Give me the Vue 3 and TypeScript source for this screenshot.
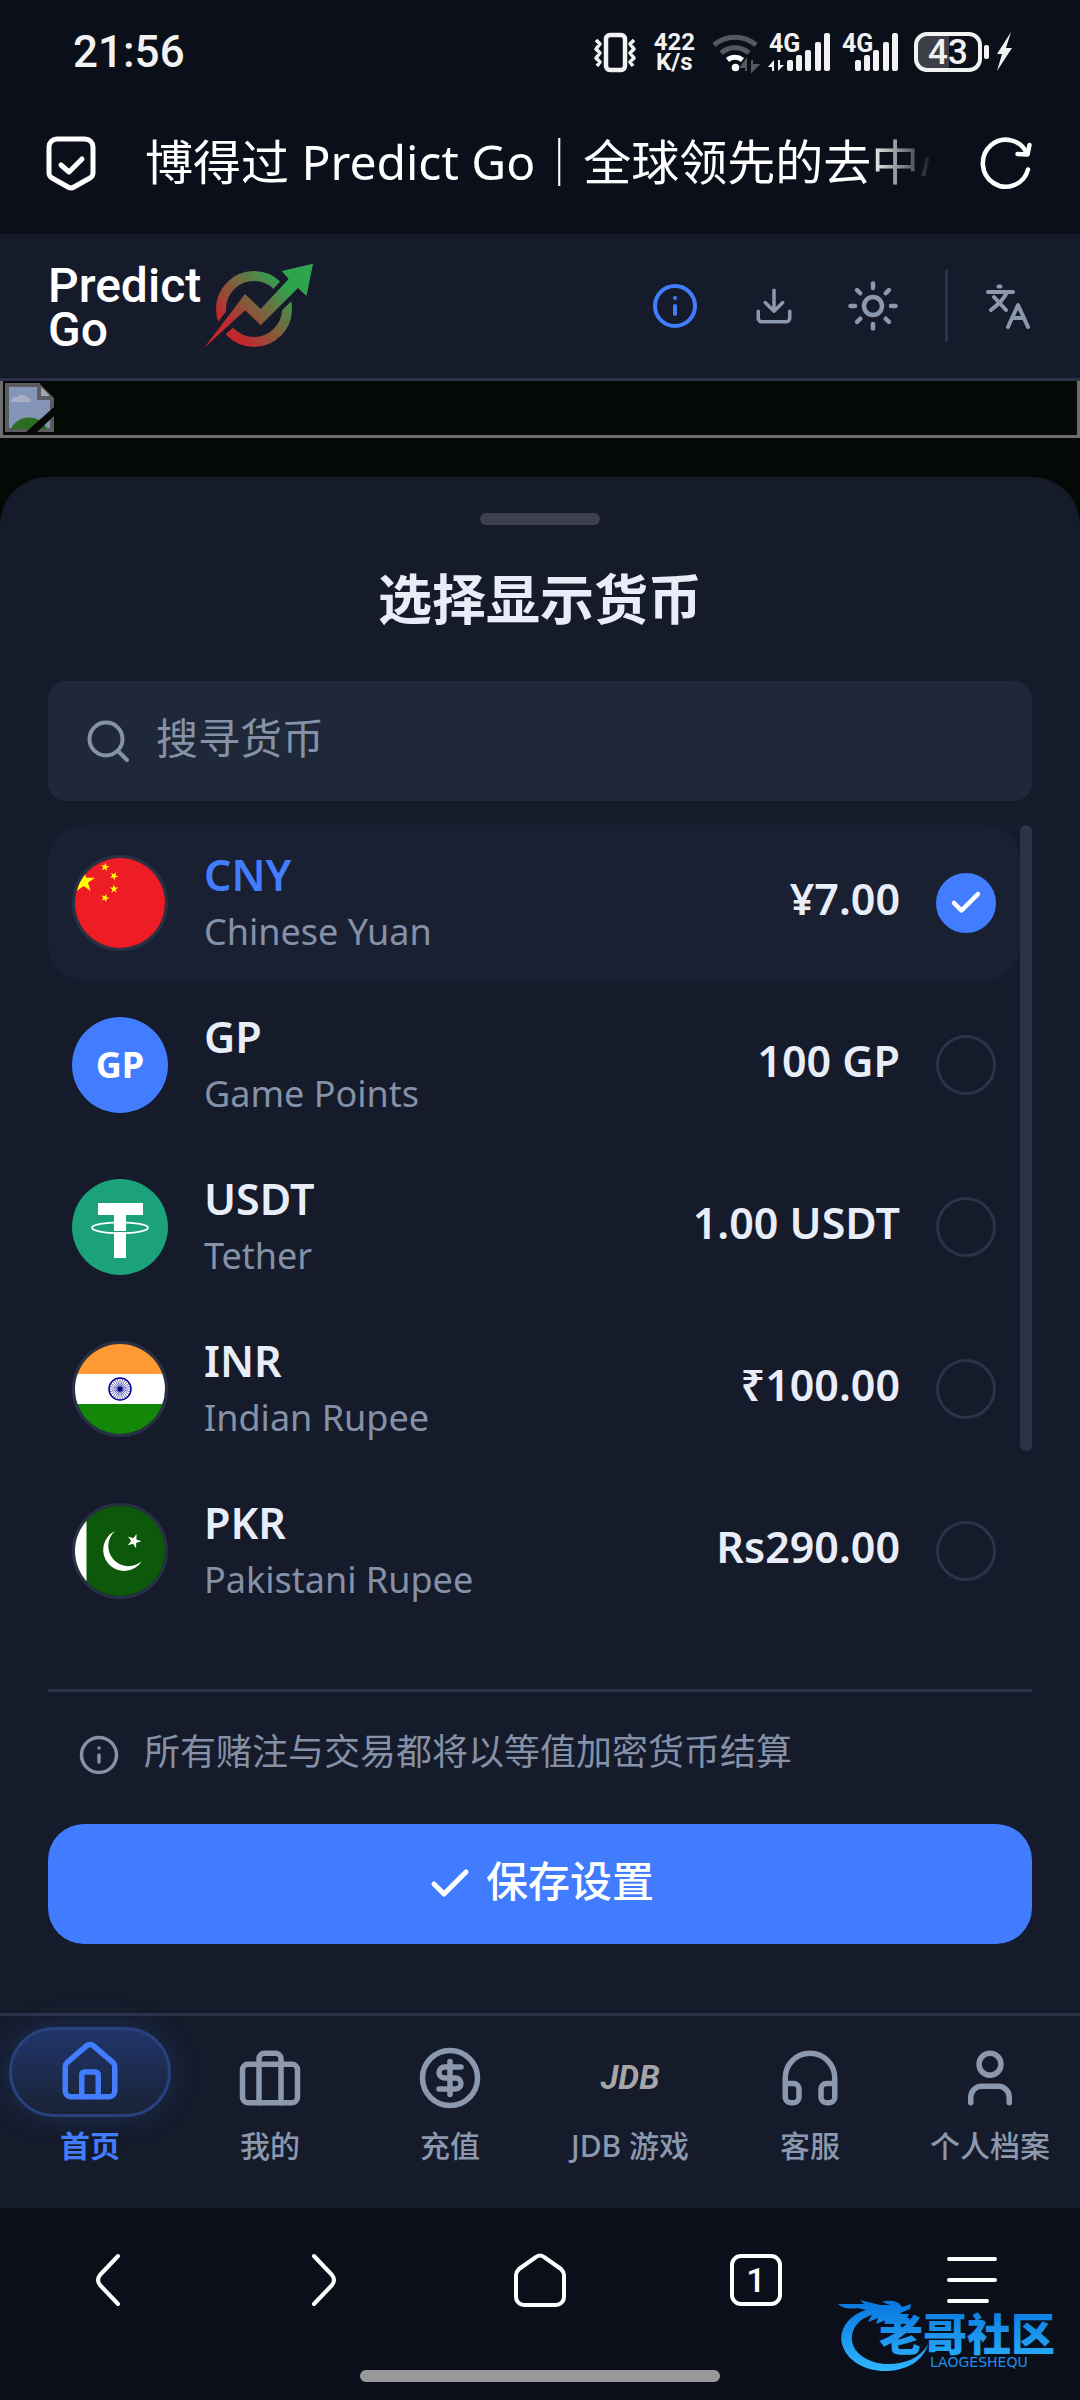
<script setup lang="ts">
import { ref } from 'vue'

interface Currency {
  code: string
  name: string
  amount: string
}

interface Tab {
  id: string
  label: string
}

const currencies: Currency[] = [
  { code: 'CNY', name: 'Chinese Yuan', amount: '¥7.00' },
  { code: 'GP', name: 'Game Points', amount: '100 GP' },
  { code: 'USDT', name: 'Tether', amount: '1.00 USDT' },
  { code: 'INR', name: 'Indian Rupee', amount: '₹100.00' },
  { code: 'PKR', name: 'Pakistani Rupee', amount: 'Rs290.00' },
]

const tabs: Tab[] = [
  { id: 'home', label: '首页' },
  { id: 'mine', label: '我的' },
  { id: 'deposit', label: '充值' },
  { id: 'jdb', label: 'JDB 游戏' },
  { id: 'support', label: '客服' },
  { id: 'profile', label: '个人档案' },
]

const selected = ref('CNY')
const activeTab = ref('home')
const query = ref('')

function star(cx: number, cy: number, r: number, turn = 0): string {
  const points: string[] = []
  for (let i = 0; i < 10; i++) {
    const radius = i % 2 === 0 ? r : r * 0.382
    const angle = ((turn - 90 + i * 36) * Math.PI) / 180
    points.push(`${(cx + radius * Math.cos(angle)).toFixed(2)},${(cy + radius * Math.sin(angle)).toFixed(2)}`)
  }
  return points.join(' ')
}

const smallStars = [
  star(30, 9, 4.5, 10),
  star(39, 18, 4.5, 30),
  star(39, 31, 4.5, 0),
  star(30, 40, 4.5, 20),
]
const spokes = Array.from({ length: 24 }, (_, i) => i * 15)
</script>

<template>
  <div class="screen">
    <div class="status">
      <span class="clock">21:56</span>
      <div class="status-icons">
        <svg class="vibrate" width="42" height="40" viewBox="0 0 42 40" fill="none" stroke="#f2f2f2">
          <rect x="12" y="3" width="19" height="35" rx="4" stroke-width="4.5" />
          <path d="M2 8l4 4-4 5 4 4-4 5 4 4-3 4M40 8l-4 4 4 5-4 4 4 5-4 4 3 4" stroke-width="3.6" stroke-linejoin="round" />
        </svg>
        <span class="speed">422<br />K/s</span>
        <svg class="wifi" width="48" height="40" viewBox="0 0 48 40" fill="none" stroke-width="5">
          <path d="M2 13a32 32 0 0 1 42 0" stroke="#56585e" />
          <path d="M9 21a21 21 0 0 1 28 0" stroke="#56585e" />
          <path d="M15.500 28a12 12 0 0 1 15 0" stroke="#fff" />
          <circle cx="23.500" cy="35.500" r="3.800" fill="#fff" />
          <path d="M34 39V28l-5 7h5M40 28v11l6-6h-6" fill="#56585e" stroke="#56585e" stroke-width="2" />
        </svg>
        <svg class="signal" width="64" height="40" viewBox="0 0 64 40" fill="#f2f2f2">
          <text x="1" y="20" class="net">4G</text>
          <path d="M6 39V28l-6 7h4v4zM10 28v11l6-6h-4v-5z" />
          <rect x="19" y="28" width="6" height="11" rx="2" />
          <rect x="28" y="23" width="6" height="16" rx="2" />
          <rect x="37" y="18" width="6" height="21" rx="2" />
          <rect x="47" y="10" width="6" height="29" rx="2" />
          <rect x="56" y="1" width="6" height="38" rx="2" />
        </svg>
        <svg class="signal" width="60" height="40" viewBox="0 0 60 40" fill="#f2f2f2">
          <text x="1" y="20" class="net">4G</text>
          <rect x="14" y="28" width="6" height="11" rx="2" />
          <rect x="23" y="23" width="6" height="16" rx="2" />
          <rect x="32" y="18" width="6" height="21" rx="2" />
          <rect x="42" y="10" width="6" height="29" rx="2" />
          <rect x="51" y="1" width="6" height="38" rx="2" />
        </svg>
        <svg class="battery" width="100" height="40" viewBox="0 0 100 40">
          <path d="M13 3h22v34H13a10 10 0 0 1-10-10V13A10 10 0 0 1 13 3z" fill="#3d4049" />
          <rect x="2" y="2" width="64" height="36" rx="11" fill="none" stroke="#f2f2f2" stroke-width="4" />
          <text x="34" y="32" text-anchor="middle" class="charge">43</text>
          <rect x="70" y="13" width="5" height="14" rx="2" fill="#f2f2f2" />
          <path d="M97 0L83 22h5l-5 17 15-23h-6z" fill="#f2f2f2" />
        </svg>
      </div>
    </div>

    <div class="address">
      <svg width="50" height="56" viewBox="0 0 50 56" fill="none" stroke="#fff" stroke-width="5" stroke-linecap="round" stroke-linejoin="round">
        <path d="M11 4h28a8 8 0 0 1 8 8v26a6 6 0 0 1-3 5L28 52a6 6 0 0 1-6 0L6 43a6 6 0 0 1-3-5V12a8 8 0 0 1 8-8z" />
        <path d="M15 30l8 7 13-13" />
      </svg>
      <p class="page-title">博得过 Predict Go｜全球领先的去中心</p>
      <button class="plain" type="button" aria-label="刷新">
        <svg width="52" height="54" viewBox="0 0 52 54" fill="none" stroke="#fff" stroke-width="4.500" stroke-linecap="round" stroke-linejoin="round">
          <path d="M48 34.500A23 23.500 0 1 1 47 19" />
          <path d="M49.500 10l-2 9.500-10-.5" />
        </svg>
      </button>
    </div>

    <header class="header">
      <a class="logo" href="#">
        <span class="wordmark">Predict<br />Go</span>
        <svg width="110" height="86" viewBox="204 263 110 86">
          <defs>
            <linearGradient id="brand" gradientUnits="userSpaceOnUse" x1="232" y1="330" x2="284" y2="282">
              <stop offset="0" stop-color="#c1272d" />
              <stop offset="1" stop-color="#2ea44f" />
            </linearGradient>
            <mask id="gap" maskUnits="userSpaceOnUse" x="204" y="263" width="110" height="86">
              <rect x="204" y="263" width="110" height="86" fill="#fff" />
              <path d="M204 348L245 294 260.700 309 288.600 279 281.700 271 313 263.700 306.500 296 298 288 260.700 325.300 245.200 310.300z" fill="#000" stroke="#000" stroke-width="9" />
            </mask>
          </defs>
          <circle cx="254" cy="309" r="33" fill="none" stroke="url(#brand)" stroke-width="10" mask="url(#gap)" />
          <path d="M204 348L245 294 260.700 309 288.600 279 281.700 271 313 263.700 306.500 296 298 288 260.700 325.300 245.200 310.300z" fill="url(#brand)" />
        </svg>
      </a>
      <div class="tools">
        <button class="tool accent" type="button" aria-label="信息">
          <svg class="line" width="48" height="48" viewBox="0 0 24 24"><circle cx="12" cy="12" r="10" /><path d="M12 16v-4M12 8h.01" /></svg>
        </button>
        <button class="tool" type="button" aria-label="下载">
          <svg class="line" width="42" height="42" viewBox="0 0 24 24"><path d="M21 15v4a2 2 0 0 1-2 2H5a2 2 0 0 1-2-2v-4M7 10l5 5 5-5M12 15V3" /></svg>
        </button>
        <button class="tool" type="button" aria-label="主题">
          <svg class="line" width="54" height="54" viewBox="0 0 24 24"><circle cx="12" cy="12" r="4" /><path d="M12 2v2M12 20v2M4.930 4.930l1.410 1.410M17.660 17.660l1.410 1.410M2 12h2M20 12h2M6.340 17.660l-1.410 1.410M19.070 4.930l-1.410 1.410" /></svg>
        </button>
      </div>
      <button class="tool lang" type="button" aria-label="语言">
        <svg class="line" width="48" height="48" viewBox="0 0 48 48"><path d="M4 10h25M14.500 4.500h2M10 15l12 13M23 10Q20 18 7 28M24 45l10-22 10 22M28 36h12" /></svg>
      </button>
    </header>

    <div class="stage">
      <div class="banner">
        <svg width="48" height="48" viewBox="0 0 48 48">
          <path d="M1 1h32l13 13v32H1z" fill="#8495b8" stroke="#5c5c60" stroke-width="4" />
          <path d="M5 18a5 5 0 0 1 6-5 7 7 0 0 1 11 1 4 4 0 0 1 3 4z" fill="#a9b1c0" />
          <path d="M5 45a19 17 0 0 1 36 0z" fill="#2e6b23" />
          <path d="M33 1v13h13" fill="#a4a7b0" stroke="#5c5c60" stroke-width="4" />
          <path d="M20 48L48 23v9L31 48z" fill="#040905" />
          <path d="M34 0h14v14z" fill="#040905" />
        </svg>
      </div>

      <main class="sheet">
        <span class="handle"></span>
        <h1>选择显示货币</h1>

        <label class="search">
          <svg width="42" height="42" viewBox="0 0 42 42" fill="none" stroke="#8491a7" stroke-width="4" stroke-linecap="round"><circle cx="19" cy="19" r="16.500" /><path d="M31 31l9 9" /></svg>
          <input v-model="query" type="text" placeholder="搜寻货币" aria-label="搜寻货币" />
        </label>

        <div class="scroller">
          <div class="list" role="radiogroup" aria-label="选择显示货币">
            <label v-for="c in currencies" :key="c.code" class="row" :class="{ on: c.code === selected }">
              <span class="flag" :class="c.code.toLowerCase()">
                <svg v-if="c.code === 'CNY'" viewBox="0 0 90 90">
                  <rect width="90" height="90" fill="#ee1c25" />
                  <polygon :points="star(8.600, 23.400, 12)" fill="#ff0" />
                  <polygon v-for="s in smallStars" :key="s" :points="s" fill="#ff0" />
                </svg>
                <template v-else-if="c.code === 'GP'">GP</template>
                <svg v-else-if="c.code === 'USDT'" viewBox="0 0 96 96">
                  <rect width="96" height="96" fill="#1ba27a" />
                  <ellipse cx="48" cy="48.800" rx="28" ry="5.500" fill="none" stroke="#fff" stroke-width="1.800" />
                  <path d="M26 24h45v12H54v43H42V36H26z" fill="#fff" />
                  <path d="M42 52.500h12" stroke="#1ba27a" stroke-width="1" />
                </svg>
                <svg v-else-if="c.code === 'INR'" viewBox="0 0 90 90">
                  <rect width="90" height="30" fill="#f93" />
                  <rect y="30" width="90" height="30" fill="#fff" />
                  <rect y="60" width="90" height="30" fill="#138808" />
                  <circle cx="45" cy="45" r="11" fill="none" stroke="#000088" stroke-width="1.500" />
                  <circle cx="45" cy="45" r="2.500" fill="#000088" />
                  <path v-for="a in spokes" :key="a" d="M45 45v-11" stroke="#000088" stroke-width=".5" :transform="`rotate(${a} 45 45)`" />
                </svg>
                <svg v-else viewBox="0 0 90 90">
                  <rect width="90" height="90" fill="#0c590b" />
                  <rect width="11.500" height="90" fill="#fff" />
                  <path d="M40 25A21 21 0 1 0 67 55 19 19 0 1 1 40 25z" fill="#fff" />
                  <polygon :points="star(59, 35, 7.500, 20)" fill="#fff" />
                </svg>
              </span>
              <span class="names">
                <span class="code">{{ c.code }}</span>
                <span class="name">{{ c.name }}</span>
              </span>
              <span class="amount">{{ c.amount }}</span>
              <span class="radio">
                <input v-model="selected" type="radio" name="currency" :value="c.code" />
                <svg v-if="c.code === selected" width="36" height="36" viewBox="0 0 24 24" fill="none" stroke="#fff" stroke-width="3" stroke-linecap="round" stroke-linejoin="round"><path d="M20 6L9 17l-5-5" /></svg>
              </span>
            </label>
          </div>
          <div class="track"><span class="thumb"></span></div>
        </div>

        <div class="note">
          <svg class="line" width="42" height="42" viewBox="0 0 24 24"><circle cx="12" cy="12" r="10" /><path d="M12 16v-4M12 8h.01" /></svg>
          <span>所有赌注与交易都将以等值加密货币结算</span>
        </div>

        <button class="save" type="button">
          <svg width="48" height="48" viewBox="0 0 24 24" fill="none" stroke="#fff" stroke-width="2.500" stroke-linecap="round" stroke-linejoin="round"><path d="M20 6L9 17l-5-5" /></svg>
          <span>保存设置</span>
        </button>
      </main>
    </div>

    <nav class="tabs">
      <a v-for="t in tabs" :key="t.id" href="#" class="tab" :class="{ active: t.id === activeTab }" @click.prevent="activeTab = t.id">
        <span class="slot">
          <span class="pill">
            <svg v-if="t.id === 'jdb'" width="66" height="66" viewBox="0 0 66 66"><text x="33" y="44" text-anchor="middle" class="jdb">JDB</text></svg>
            <svg v-else class="line tab-icon" width="66" height="66" viewBox="0 0 24 24">
              <template v-if="t.id === 'home'">
                <path d="M15 21v-8a1 1 0 0 0-1-1h-4a1 1 0 0 0-1 1v8" />
                <path d="M3 10a2 2 0 0 1 .709-1.528l7-5.999a2 2 0 0 1 2.582 0l7 5.999A2 2 0 0 1 21 10v9a2 2 0 0 1-2 2H5a2 2 0 0 1-2-2z" />
              </template>
              <template v-else-if="t.id === 'mine'">
                <rect x="2" y="7" width="20" height="14" rx="2" />
                <path d="M16 21V5a2 2 0 0 0-2-2h-4a2 2 0 0 0-2 2v16" />
              </template>
              <template v-else-if="t.id === 'deposit'">
                <circle cx="12" cy="12" r="10" />
                <path d="M16 8h-6a2 2 0 1 0 0 4h4a2 2 0 1 1 0 4H8M12 18V6" />
              </template>
              <path v-else-if="t.id === 'support'" d="M3 14h3a2 2 0 0 1 2 2v3a2 2 0 0 1-2 2H5a2 2 0 0 1-2-2v-7a9 9 0 0 1 18 0v7a2 2 0 0 1-2 2h-1a2 2 0 0 1-2-2v-3a2 2 0 0 1 2-2h3" />
              <template v-else>
                <path d="M19 21v-2a4 4 0 0 0-4-4H9a4 4 0 0 0-4 4v2" />
                <circle cx="12" cy="7" r="4" />
              </template>
            </svg>
          </span>
        </span>
        <span class="tab-label">{{ t.label }}</span>
      </a>
    </nav>

    <footer class="browser">
      <div class="browser-row">
        <button class="plain" type="button" aria-label="后退"><svg class="chrome" viewBox="0 0 60 60"><path d="M40 6L22 25q-4 5 0 10l18 19" /></svg></button>
        <button class="plain" type="button" aria-label="前进"><svg class="chrome" viewBox="0 0 60 60"><path d="M20 6l18 19q4 5 0 10L20 54" /></svg></button>
        <button class="plain" type="button" aria-label="主页"><svg class="chrome" viewBox="0 0 60 60"><path d="M26 7q4-3 8 0l17 12q3 3 3 6v22a8 8 0 0 1-8 8H14a8 8 0 0 1-8-8V25q0-3 3-6z" /></svg></button>
        <button class="plain" type="button" aria-label="标签页"><span class="count">1</span></button>
        <button class="plain" type="button" aria-label="菜单"><svg class="chrome" viewBox="0 0 60 60"><path d="M7 9h46M7 30h46M7 51h38" /></svg></button>
      </div>
      <span class="gesture"></span>
      <svg class="mark" width="228" height="80" viewBox="0 0 228 80">
        <defs>
          <linearGradient id="sea" gradientUnits="userSpaceOnUse" x1="0" y1="10" x2="0" y2="76">
            <stop offset="0" stop-color="#0a78e0" />
            <stop offset="1" stop-color="#2fb4fc" />
          </linearGradient>
        </defs>
        <path d="M30 16C10 22 3 38 6 50 11 68 31 78 52 77 72 76 88 66 92 50 84 64 70 70 52 70 34 70 17 60 16 46 15 34 24 24 36 21L32 28 42 24 40 30 52 25 60 28 70 26 73 20 62 20 74 15 75 10 66 13C62 6 52 6 46 8L54 11 44 11 24 6 28 10 2 10Q8 16 22 14z" fill="url(#sea)" />
        <text x="43" y="57" class="mark-name" fill="url(#sea)">老哥社区</text>
        <text x="94" y="73" class="mark-latin">LAOGESHEQU</text>
      </svg>
    </footer>
  </div>
</template>

<style>
html,
body {
  margin: 0;
  background: #0b0f19;
}
</style>

<style scoped>
.screen {
  display: flex;
  flex-direction: column;
  min-height: 100vh;
  background: #0b0f19;
  color: #e9edf8;
  font-family: "Noto Sans", "Noto Sans CJK SC", sans-serif;
}
svg {
  display: block;
  flex: none;
  overflow: visible;
}
button {
  padding: 0;
  border: 0;
  background: none;
  color: inherit;
  font: inherit;
  cursor: pointer;
}
a {
  color: inherit;
  text-decoration: none;
}
.line {
  fill: none;
  stroke: currentColor;
  stroke-width: 2;
  stroke-linecap: round;
  stroke-linejoin: round;
}
.plain {
  display: grid;
  place-items: center;
}

.status {
  display: flex;
  align-items: center;
  justify-content: space-between;
  box-sizing: border-box;
  height: 104px;
  padding: 0 66px 0 73px;
  font-family: Roboto, sans-serif;
  color: #f2f2f2;
}
.clock {
  font-size: 44px;
  line-height: 54px;
  font-weight: 500;
}
.status-icons {
  display: flex;
  align-items: center;
}
.speed {
  margin: 0 17px 0 18px;
  font-size: 24px;
  line-height: 20px;
  font-weight: 700;
  text-align: center;
}
.wifi {
  margin-right: 8px;
}
.signal {
  margin-right: 9px;
}
.battery {
  margin-left: 4px;
}
.net {
  font-size: 25px;
  font-weight: 700;
}
.charge {
  font-size: 35px;
  font-weight: 500;
  fill: #f2f2f2;
}

.address {
  display: flex;
  align-items: center;
  height: 130px;
  padding: 0 48px 0 46px;
}
.address > svg {
  margin-bottom: 12px;
}
.address .plain {
  margin-bottom: 14px;
}
.page-title {
  flex: 1;
  overflow: hidden;
  margin: 0 46px 14px 49px;
  color: #fff;
  font-size: 48px;
  line-height: 72px;
  white-space: nowrap;
  mask-image: linear-gradient(to right, #000 calc(100% - 66px), transparent);
}

.header {
  display: flex;
  align-items: center;
  height: 144px;
  padding: 0 48px;
  border-bottom: 3px solid #2a3347;
  background: #151b2b;
}
.logo {
  display: flex;
  align-items: center;
  gap: 3px;
  margin-right: auto;
  color: #fff;
}
.wordmark {
  padding-top: 4px;
  font-family: Roboto, sans-serif;
  font-size: 48px;
  line-height: 44px;
  font-weight: 500;
}
.tools {
  display: flex;
  gap: 45px;
  padding: 9px 45px 9px 0;
  border-right: 3px solid #2a3347;
}
.tool {
  display: grid;
  place-items: center;
  width: 54px;
  height: 54px;
  color: #8b98ae;
}
.tool.accent {
  color: #437dff;
}
.tool.lang {
  width: 48px;
  margin-left: 36px;
}
.tool.lang .line {
  stroke-width: 4;
}

.stage {
  display: flex;
  flex: 1;
  flex-direction: column;
  gap: 39px;
  background: #040905;
}
.banner {
  padding: 3px;
  border: 3px solid #6d6d70;
  border-top: 0;
}

.sheet {
  display: flex;
  flex: 1;
  flex-direction: column;
  padding: 36px 48px 69px;
  border-radius: 48px 48px 0 0;
  background: #151b2a;
}
.handle {
  align-self: center;
  width: 120px;
  height: 12px;
  border-radius: 6px;
  background: #3c4050;
}
h1 {
  margin: 38px 0 46px;
  font-size: 54px;
  line-height: 72px;
  font-weight: 700;
  text-align: center;
}
.search {
  display: flex;
  align-items: center;
  gap: 27px;
  height: 120px;
  padding: 0 36px 0 39px;
  border-radius: 18px;
  background: #1f2838;
}
.search input {
  flex: 1;
  min-width: 0;
  padding: 0 0 6px;
  border: 0;
  outline: 0;
  background: none;
  color: #e9edf8;
  font: inherit;
  font-size: 42px;
  line-height: 60px;
}
.search input::placeholder {
  color: #8491a7;
  opacity: 1;
}

.scroller {
  display: flex;
  min-height: 840px;
  margin: 24px 0;
}
.list {
  display: flex;
  flex: 1;
  flex-direction: column;
  gap: 6px;
}
.row {
  display: flex;
  align-items: center;
  box-sizing: border-box;
  height: 156px;
  padding: 0 24px;
  border-radius: 36px;
}
.row.on {
  background: #182032;
}
.flag {
  display: grid;
  place-items: center;
  box-sizing: border-box;
  width: 96px;
  height: 96px;
  overflow: hidden;
  border: 3px solid #283244;
  border-radius: 50%;
  color: #fff;
  font-size: 36px;
  line-height: 48px;
  font-weight: 700;
}
.flag svg {
  width: 100%;
  height: 100%;
}
.flag.gp,
.flag.usdt {
  border: 0;
}
.flag.gp {
  background: #437dff;
}
.names {
  display: flex;
  flex: 1;
  flex-direction: column;
  margin: 0 24px 0 36px;
}
.code,
.amount {
  padding-bottom: 2px;
  font-size: 43px;
  line-height: 56px;
  font-weight: 600;
}
.on .code {
  color: #437dff;
}
.name {
  color: #8491a7;
  font-size: 36px;
  line-height: 54px;
}
.amount {
  margin-right: 36px;
  padding-bottom: 8px;
}
.radio {
  display: grid;
  place-items: center;
}
.radio > * {
  grid-area: 1 / 1;
}
.radio input {
  box-sizing: border-box;
  width: 60px;
  height: 60px;
  margin: 0;
  border: 3px solid #2a3347;
  border-radius: 50%;
  appearance: none;
}
.radio input:checked {
  border-color: #437dff;
  background: #437dff;
}
.radio svg {
  z-index: 1;
  pointer-events: none;
}
.track {
  width: 12px;
}
.thumb {
  display: block;
  height: 626px;
  border-radius: 6px;
  background: #2a3347;
}

.note {
  display: flex;
  align-items: center;
  gap: 24px;
  padding: 36px 30px 48px;
  border-top: 3px solid #2a3347;
  color: #8491a7;
  font-size: 36px;
  line-height: 48px;
}
.note svg {
  margin-top: 6px;
}
.save {
  display: flex;
  align-items: center;
  justify-content: center;
  gap: 12px;
  height: 120px;
  border-radius: 36px;
  background: #417cff;
  color: #fff;
  font-size: 42px;
  line-height: 60px;
  font-weight: 500;
}
.save span {
  padding-bottom: 6px;
}

.tabs {
  display: grid;
  grid-template-columns: repeat(6, 1fr);
  padding: 11px 0 44px;
  border-top: 3px solid #2a3347;
  background: #151b2b;
  color: #8b98ae;
}
.tab {
  display: flex;
  flex-direction: column;
  align-items: center;
}
.slot {
  display: flex;
  align-items: center;
  align-self: stretch;
  height: 101px;
  padding: 0 9px;
}
.pill {
  display: grid;
  flex: 1;
  place-items: center;
  box-sizing: border-box;
  height: 90px;
}
.active .pill {
  align-self: flex-start;
  border: 3px solid #27427f;
  border-radius: 45px;
  background: linear-gradient(#20356a, #192235);
  box-shadow: 0 0 30px rgba(65, 124, 255, 0.2);
}
.tab-label {
  font-size: 30px;
  line-height: 36px;
  font-weight: 500;
  white-space: nowrap;
}
.active {
  color: #437dff;
}
.active .tab-label {
  font-weight: 700;
}
.jdb {
  font-family: Roboto, sans-serif;
  font-size: 33px;
  font-style: italic;
  font-weight: 700;
  fill: #a6a5aa;
}

.browser {
  display: flex;
  position: relative;
  flex-direction: column;
  align-items: center;
  padding-bottom: 18px;
}
.browser-row {
  display: grid;
  grid-template-columns: repeat(5, 1fr);
  width: 100%;
  height: 162px;
}
.browser-row .plain {
  padding-bottom: 18px;
}
.chrome {
  width: 60px;
  height: 60px;
  fill: none;
  stroke: #fff;
  stroke-width: 4;
  stroke-linecap: round;
  stroke-linejoin: round;
}
.count {
  box-sizing: border-box;
  width: 52px;
  height: 52px;
  border: 4px solid #fff;
  border-radius: 11px;
  color: #fff;
  font-family: Roboto, sans-serif;
  font-size: 34px;
  line-height: 44px;
  font-weight: 500;
  text-align: center;
}
.gesture {
  width: 360px;
  height: 12px;
  border-radius: 6px;
  background: #999;
}
.mark {
  position: absolute;
  right: 16px;
  bottom: 26px;
}
.mark-name {
  font-family: "Noto Sans CJK SC", sans-serif;
  font-size: 44px;
  font-weight: 900;
}
.mark-latin {
  font-family: "DejaVu Sans", sans-serif;
  font-size: 14px;
  fill: #1d8fe6;
}
</style>
